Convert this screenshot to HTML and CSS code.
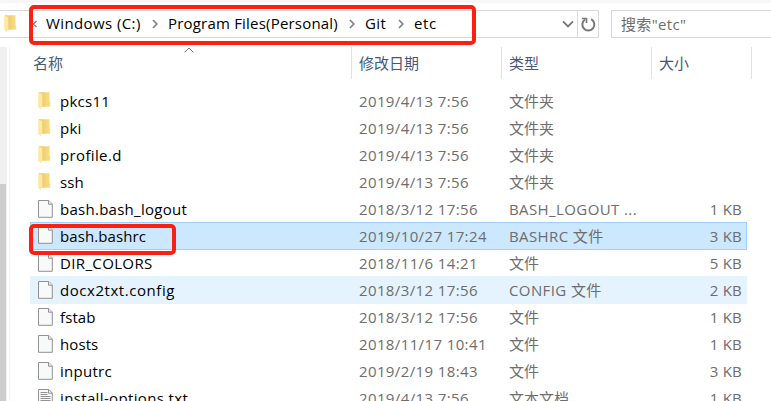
FILE: index.html
```html
<!DOCTYPE html>
<html lang="zh-CN">
<head>
<meta charset="utf-8">
<title>etc</title>
<link rel="stylesheet" href="styles.css">
</head>
<body>
<svg class="defs" aria-hidden="true">
  <defs>
    <linearGradient id="fold" x1="0" x2="1" y1="0" y2="0"><stop offset="0" stop-color="#e8c468"/><stop offset="1" stop-color="#fbdf85"/></linearGradient>
    <symbol id="folder" viewBox="0 0 13 18">
      <path fill="url(#fold)" d="M1 .3h10.6v9.9h.7v4.6H1z"/>
      <path fill="#ffe9a2" d="M.2.3 4.3 2v12.5H3.2v3L.2 15z"/>
    </symbol>
    <symbol id="file" viewBox="0 0 15 18">
      <path fill="#f8f9f9" stroke="#929292" d="M.5.5h10.3l3.5 3.5v13.3H.5z"/>
      <path fill="#eee" stroke="#929292" d="M10.5.5v3.7h3.8"/>
    </symbol>
    <symbol id="text" viewBox="0 0 15 18">
      <path fill="#f8f9f9" stroke="#929292" d="M.5.5h10.3l3.5 3.5v13.3H.5z"/>
      <path fill="none" stroke="#929292" d="M10.5.5v3.7h3.8M2.5 3.5h7M2.5 5.5h7M2.5 7.5h10M2.5 9.5h10M2.5 11.5h10M2.5 13.5h10M2.5 15.5h10"/>
    </symbol>
    <symbol id="chev" viewBox="0 0 6 10"><path fill="none" stroke="#858585" stroke-width="1.8" d="m1 1 3.8 4L1 9"/></symbol>
  </defs>
</svg>
<div class="window">
  <header class="toolbar">
    <div class="address">
      <svg class="place" width="13" height="18"><use href="#folder"/></svg>
      <svg class="more" width="8" height="8" viewBox="0 0 8 8"><path fill="none" stroke="#777" stroke-width="1.2" d="M4 1 1 4l3 3M7.5 1l-3 3 3 3"/></svg>
      <nav class="crumbs">
        <span class="c1">Windows (C:)</span><svg class="chev"><use href="#chev"/></svg>
        <span class="c2">Program Files(Personal)</span><svg class="chev"><use href="#chev"/></svg>
        <span class="c3">Git</span><svg class="chev"><use href="#chev"/></svg>
        <span class="c4">etc</span>
      </nav>
      <svg class="drop" width="12" height="8" viewBox="0 0 12 8"><path fill="none" stroke="#777" stroke-width="1.9" d="m1 1.3 5 5 5-5"/></svg>
      <div class="refresh"><svg width="15" height="15" viewBox="0 0 15 15"><path fill="none" stroke="#777" stroke-width="2" d="M10.2 2.2A6 6 0 1 1 4 2.5"/><path fill="none" stroke="#777" stroke-width="1.6" d="M1 1.5h4.5V6"/></svg></div>
    </div>
    <div class="search">搜索"etc"</div>
  </header>
  <div class="body">
    <aside class="scroll"><div class="thumb"></div></aside>
    <main class="list">
      <div class="head">
        <div class="h-name">名称</div><div>修改日期</div><div>类型</div><div>大小</div>
      </div>
      <div class="row"><svg><use href="#folder"/></svg><span class="name">pkcs11</span><span class="date">2019/4/13 7:56</span><span>文件夹</span><span></span></div>
      <div class="row"><svg><use href="#folder"/></svg><span class="name">pki</span><span class="date">2019/4/13 7:56</span><span>文件夹</span><span></span></div>
      <div class="row"><svg><use href="#folder"/></svg><span class="name loose">profile.d</span><span class="date">2019/4/13 7:56</span><span>文件夹</span><span></span></div>
      <div class="row"><svg><use href="#folder"/></svg><span class="name tight">ssh</span><span class="date">2019/4/13 7:56</span><span>文件夹</span><span></span></div>
      <div class="row"><svg><use href="#file"/></svg><span class="name">bash.bash_logout</span><span class="date">2018/3/12 17:56</span><span class="type">BASH_LOGOUT ...</span><span class="size">1 KB</span></div>
      <div class="row selected"><svg><use href="#file"/></svg><span class="name tight">bash.bashrc</span><span class="date">2019/10/27 17:24</span><span class="type">BASHRC 文件</span><span class="size">3 KB</span></div>
      <div class="row"><svg><use href="#file"/></svg><span class="name loose">DIR_COLORS</span><span class="date">2018/11/6 14:21</span><span>文件</span><span class="size">5 KB</span></div>
      <div class="row hover"><svg><use href="#file"/></svg><span class="name looser">docx2txt.config</span><span class="date">2018/3/12 17:56</span><span class="type">CONFIG 文件</span><span class="size">2 KB</span></div>
      <div class="row"><svg><use href="#file"/></svg><span class="name tight">fstab</span><span class="date">2018/3/12 17:56</span><span>文件</span><span class="size">1 KB</span></div>
      <div class="row"><svg><use href="#file"/></svg><span class="name tight">hosts</span><span class="date">2018/11/17 10:41</span><span>文件</span><span class="size">1 KB</span></div>
      <div class="row"><svg><use href="#file"/></svg><span class="name">inputrc</span><span class="date">2019/2/19 18:43</span><span>文件</span><span class="size">3 KB</span></div>
      <div class="row"><svg><use href="#text"/></svg><span class="name loose">install-options.txt</span><span class="date">2019/4/13 7:56</span><span>文本文档</span><span class="size">1 KB</span></div>
    </main>
  </div>
  <svg class="sort" width="10" height="6" viewBox="0 0 10 6"><path fill="none" stroke="#777" d="m.7 5.2 4.3-4.2 4.3 4.2"/></svg>
  <div class="mark mark-path"></div>
  <div class="mark mark-file"></div>
</div>
</body>
</html>
```
FILE: styles.css
```css
* { box-sizing: border-box; }
body { margin: 0; background: #fff; font: 15px/27px "Open Sans", "Noto Sans CJK SC", sans-serif; color: #000; }
.defs { position: absolute; width: 0; height: 0; }
.window { position: relative; width: 771px; height: 401px; overflow: hidden; white-space: nowrap; }
.toolbar { display: flex; height: 47px; padding-top: 7px; border-top: 3px solid #dadde1; border-image: linear-gradient(#f5f6f7 66%, #d9dce0 66%) 3; }
.address { display: flex; align-items: center; width: 599px; height: 28px; border: 1px solid #d9d9d9; border-left: 0; padding-left: 4px; }
.more { margin: 0 8px 0 12px; }
.crumbs { display: flex; align-items: center; padding-left: 1px; letter-spacing: .2px; }
.crumbs span { margin-top: -1px; }
.chev { width: 6px; height: 10px; margin: 0 10px 0 11px; }
.c1 { width: 95px; letter-spacing: .4px; }
.c2 { width: 170px; }
.c3 { width: 22px; letter-spacing: .4px; }
.c4 { letter-spacing: .6px; }
.drop { margin-left: auto; }
.refresh { display: flex; align-items: center; justify-content: center; width: 21px; height: 26px; margin-left: 3px; border-left: 1px solid #d9d9d9; }
.search { flex: 1; height: 28px; margin-left: 12px; padding-left: 9px; border: 1px solid #d9d9d9; border-right: 0; color: #6d6d6d; letter-spacing: .35px; }
.body { display: flex; height: 354px; }
.scroll { width: 10px; padding-top: 137px; border-right: 1px solid #f3f3f3; background: linear-gradient(90deg, #f0f0f0 7px, #fff 7px); }
.thumb { width: 6px; height: 217px; background: #cdcdcd; }
.list { flex: 1; padding-left: 20px; }
.head { display: grid; grid-template-columns: 322px 150px 150px 100px; height: 40px; color: #44597a; }
.head div { height: 32px; padding: 3px 0 0 7px; border-right: 1px solid #e2e2e2; }
.head .h-name { padding-left: 3px; }
.row { display: grid; grid-template-columns: 22px 299px 150px 150px 83px; align-items: center; width: 717px; height: 27px; padding: 1px 0 0 8px; color: #6d6d6d; }
.row svg { width: 15px; height: 18px; margin-top: -2px; }
.row svg:has([href="#folder"]) { width: 13px; }
.row .name { color: #000; letter-spacing: .27px; }
.row .tight { letter-spacing: .1px; }
.row .loose { letter-spacing: .36px; }
.row .looser { letter-spacing: .55px; }
.date { letter-spacing: .38px; }
.type { letter-spacing: .4px; }
.size { text-align: right; letter-spacing: .2px; }
.selected { height: 28px; margin-bottom: -1px; padding: 0 0 0 8px; background: #cce8ff; box-shadow: inset 0 0 0 1px #99d1ff; }
.hover { height: 28px; margin-bottom: -1px; background: #e5f3ff; }
.sort { position: absolute; left: 184px; top: 47px; }
.mark { position: absolute; border: 4px solid #fc2012; border-radius: 5px; }
.mark-path { left: 29px; top: 5px; width: 447px; height: 40px; }
.mark-file { left: 29px; top: 224px; width: 147px; height: 31px; }
```
